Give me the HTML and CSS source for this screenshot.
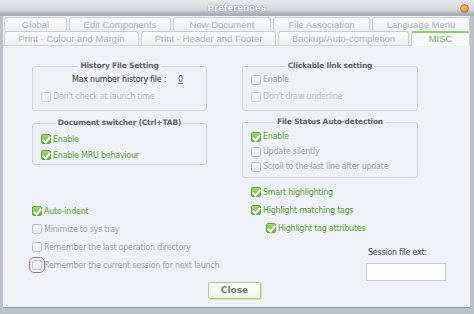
FILE: index.html
```html
<!DOCTYPE html>
<html>
<head>
<meta charset="utf-8">
<link rel="stylesheet" href="styles.css">
</head>
<body>
<div class="window">
  <div class="titlebar">
    <span></span>
    <span class="title">Preferences</span>
    <span class="dot"></span>
  </div>
  <div class="frame">
    <div class="tabs">
      <div class="tabrow">
        <div class="tab t-global">Global</div>
        <div class="tab t-edit">Edit Components</div>
        <div class="tab t-new">New Document</div>
        <div class="tab t-assoc">File Association</div>
        <div class="tab t-lang">Language Menu</div>
      </div>
      <div class="tabrow">
        <div class="tab t-pcm">Print - Colour and Margin</div>
        <div class="tab t-phf">Print - Header and Footer</div>
        <div class="tab t-backup">Backup/Auto-completion</div>
        <div class="tab t-misc active">MISC</div>
      </div>
    </div>
    <div class="panel">
      <div class="cols">
        <div class="col col-left">
          <fieldset class="group g-history">
            <legend>History File Setting</legend>
            <div class="row row-max"><span class="dark">Max number history file :</span><a class="link">0</a></div>
            <div class="row"><span class="cb disabled"></span><span class="lbl dis">Don't check at launch time</span></div>
          </fieldset>
          <fieldset class="group g-switch">
            <legend>Document switcher (Ctrl+TAB)</legend>
            <div class="row"><span class="cb checked"></span><span class="lbl on">Enable</span></div>
            <div class="row"><span class="cb checked"></span><span class="lbl on">Enable MRU behaviour</span></div>
          </fieldset>
          <div class="opts opts-left">
            <div class="row"><span class="cb checked"></span><span class="lbl on">Auto-indent</span></div>
            <div class="row"><span class="cb"></span><span class="lbl off">Minimize to sys tray</span></div>
            <div class="row"><span class="cb"></span><span class="lbl off">Remember the last operation directory</span></div>
            <div class="row"><span class="cb focus"></span><span class="lbl off">Remember the current session for next launch</span></div>
          </div>
        </div>
        <div class="col col-right">
          <fieldset class="group g-link">
            <legend>Clickable link setting</legend>
            <div class="row"><span class="cb"></span><span class="lbl off">Enable</span></div>
            <div class="row"><span class="cb disabled"></span><span class="lbl dis">Don't draw underline</span></div>
          </fieldset>
          <fieldset class="group g-status">
            <legend>File Status Auto-detection</legend>
            <div class="row"><span class="cb checked"></span><span class="lbl on">Enable</span></div>
            <div class="row"><span class="cb"></span><span class="lbl off">Update silently</span></div>
            <div class="row"><span class="cb"></span><span class="lbl off">Scroll to the last line after update</span></div>
          </fieldset>
          <div class="opts opts-right">
            <div class="row"><span class="cb checked"></span><span class="lbl on">Smart highlighting</span></div>
            <div class="row"><span class="cb checked"></span><span class="lbl on">Highlight matching tags</span></div>
            <div class="row indent"><span class="cb checked"></span><span class="lbl on">Highlight tag attributes</span></div>
          </div>
          <div class="session">
            <div class="session-label">Session file ext:</div>
            <div class="input"></div>
          </div>
        </div>
      </div>
      <div class="actions">
        <div class="button">Close</div>
      </div>
    </div>
  </div>
</div>
</body>
</html>
```

FILE: styles.css
```css
* { box-sizing: border-box; }
html, body { margin: 0; padding: 0; }
body {
  width: 474px;
  height: 314px;
  overflow: hidden;
  background: #b9c1ca;
  font-family: "DejaVu Sans", sans-serif;
}
.window {
  width: 474px;
  height: 314px;
  display: flex;
  flex-direction: column;
  background: #b9c1ca;
}
.titlebar {
  flex: none;
  height: 16px;
  display: grid;
  grid-template-columns: 1fr auto 1fr;
  align-items: center;
  background: linear-gradient(#e6e9ec 0%, #d3d8de 60%, #aab3bd 85%, #a3acb7 100%);
}
.title {
  font-family: "Liberation Sans", sans-serif;
  font-size: 9.5px;
  font-weight: bold;
  color: #ffffff;
  text-shadow: 0 0 1px #7f8893, 0 0 2px #98a1ab;
  letter-spacing: 0.4px;
  padding-bottom: 1px;
}
.dot {
  justify-self: end;
  width: 9px;
  height: 9px;
  margin-right: 5px;
  border-radius: 50%;
  background: radial-gradient(circle at 40% 35%, #ffd9a0 0%, #f29a3c 45%, #d26a14 100%);
  border: 1px solid #b9733a;
}
.frame {
  flex: 1;
  min-height: 0;
  display: flex;
  flex-direction: column;
  margin: 0 4px 6px 3px;
  border-bottom: 1px solid #8f99a4;
}
.tabs {
  flex: none;
  display: flex;
  flex-direction: column;
  background: #f1f3f5;
  padding-top: 1px;
}
.tabrow {
  display: flex;
  height: 14px;
  align-items: stretch;
}
.tab {
  font-family: "Liberation Sans", sans-serif;
  font-size: 9.5px;
  color: #aeb3b9;
  text-align: center;
  line-height: 13px;
  white-space: nowrap;
  border: 1px solid #c9ced4;
  border-bottom: none;
  border-radius: 3px 3px 0 0;
  background: linear-gradient(#fbfcfd, #eef0f3);
  margin-right: 2px;
}
.t-global { width: 63px; margin-left: 1px; }
.t-edit { width: 102px; }
.t-new { width: 98px; }
.t-assoc { width: 97px; }
.t-lang { width: 98px; margin-right: 0; }
.t-pcm { width: 135px; margin-left: 1px; }
.t-phf { width: 135px; }
.t-backup { width: 131px; }
.t-misc { flex: 1; margin-right: 0; }
.tab.active {
  color: #7fa86a;
  background: #f6f8fa;
  border-color: #c6d8b8;
  border-top: 2px solid #94c96d;
  line-height: 12px;
  height: 15px;
  position: relative;
  z-index: 1;
}
.panel {
  flex: 1;
  min-height: 0;
  background: #eef1f5;
  border-top: 1px solid #d2d7dd;
  display: flex;
  flex-direction: column;
}
.cols {
  display: grid;
  grid-template-columns: 175px 176px;
  column-gap: 35px;
  padding-left: 29px;
  padding-top: 15px;
}
.col { display: flex; flex-direction: column; }
.group {
  margin: 0;
  border: 1px solid #d0d5db;
  border-radius: 3px;
  padding: 0 8px 5px 8px;
  min-width: 0;
}
.group legend {
  margin: 0 auto;
  padding: 0 2px;
  font-size: 7.5px;
  font-weight: bold;
  letter-spacing: -0.2px;
  color: #5e636a;
  line-height: 10px;
}
.row {
  display: flex;
  align-items: center;
  height: 16px;
  font-size: 8px;
  letter-spacing: -0.25px;
  white-space: nowrap;
}
.g-history .row, .g-link .row { height: 17px; }
.row-max { padding-left: 31px; }
.dark { color: #2f3236; }
.link {
  color: #4a62b5;
  text-decoration: underline;
  margin-left: 12px;
}
.g-switch { margin-top: 7px; padding-top: 3px; padding-bottom: 1px; }
.g-status { margin-top: 6px; padding-top: 2px; padding-bottom: 3px; }
.g-status .row { height: 15px; }
.cb {
  flex: none;
  width: 10px;
  height: 10px;
  border: 1px solid #bcc2c9;
  border-radius: 2px;
  background: linear-gradient(#ffffff, #e5e8ec);
  margin-right: 2px;
  position: relative;
}
.cb.disabled { border-color: #d2d6db; background: linear-gradient(#f8f9fa, #eceff2); }
.cb.checked {
  border-color: #62a23a;
  background: linear-gradient(#a2d67a, #6db242);
}
.cb.checked::after {
  content: "";
  position: absolute;
  left: 2px;
  top: 0px;
  width: 3px;
  height: 6px;
  border: solid #ffffff;
  border-width: 0 2px 2px 0;
  transform: rotate(40deg);
}
.cb.focus { outline: 1px solid #b86a78; outline-offset: 2px; }
.lbl.on { color: #5d9b38; }
.lbl.off { color: #9ea4ab; }
.lbl.dis { color: #bcc0c6; }
.opts { display: flex; flex-direction: column; }
.opts .row { height: 18px; }
.opts-left { margin-top: 37px; padding-left: 0; }
.opts-right { margin-top: 5px; padding-left: 9px; }
.opts-right .indent { padding-left: 15px; }
.session {
  margin-left: 124px;
  margin-top: 9px;
  display: flex;
  flex-direction: column;
}
.session-label {
  font-size: 8px;
  letter-spacing: -0.25px;
  white-space: nowrap;
  color: #3f4348;
  line-height: 14px;
  padding-left: 2px;
}
.input {
  margin-top: 3px;
  width: 80px;
  height: 18px;
  background: #ffffff;
  border: 1px solid #c6cbd1;
}
.actions {
  display: flex;
  justify-content: center;
  margin-top: 1px;
  padding-right: 4px;
}
.button {
  width: 53px;
  height: 17px;
  border: 1px solid #a2d07c;
  border-radius: 2px;
  background: linear-gradient(#ffffff, #eef3ea);
  box-shadow: 1px 1px 0 #c5e3ad;
  font-family: "DejaVu Sans", sans-serif;
  font-size: 9px;
  font-weight: bold;
  color: #6c7868;
  text-align: center;
  line-height: 15px;
}
```
